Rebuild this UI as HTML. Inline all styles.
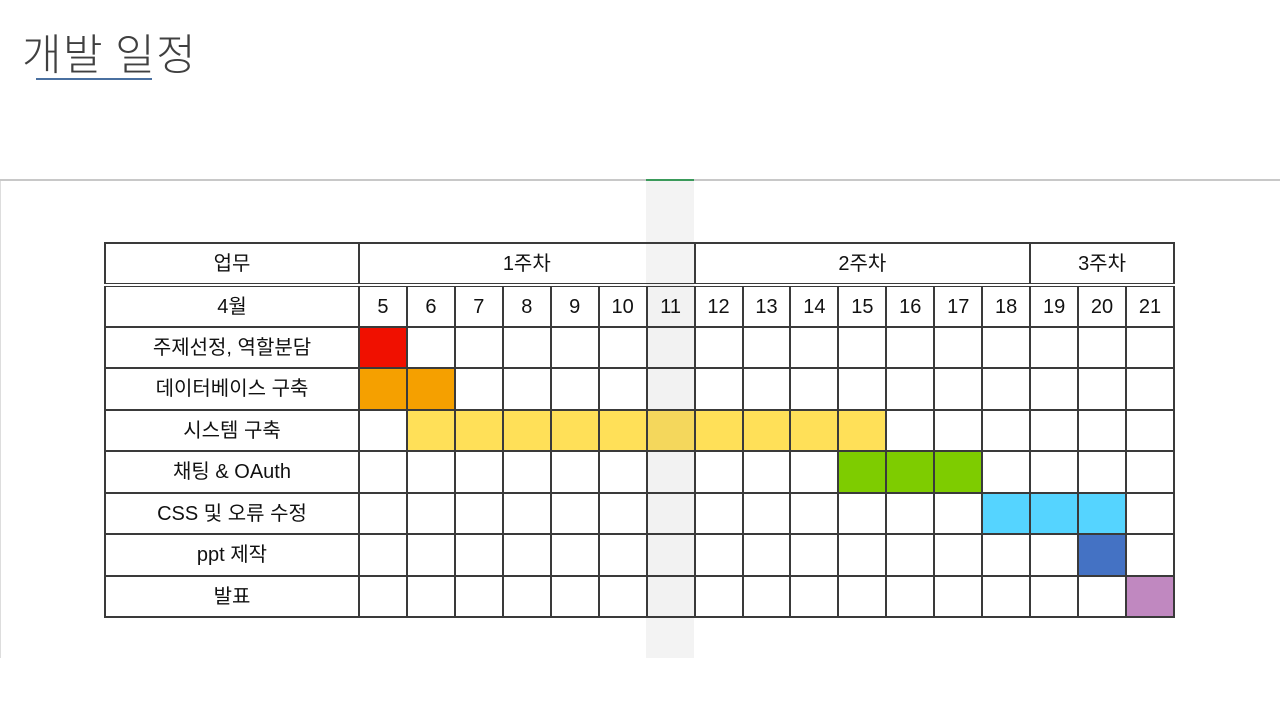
<!DOCTYPE html>
<html><head><meta charset="utf-8"><style>
*{margin:0;padding:0;box-sizing:border-box}
body{width:1280px;height:720px;background:#fff;position:relative;overflow:hidden;font-family:"Liberation Sans","Noto Sans CJK KR",sans-serif}
.title{position:absolute;left:22px;top:21px;font-size:43px;font-weight:300;color:#404040;letter-spacing:1.5px;font-family:"Noto Sans CJK KR","Liberation Sans",sans-serif}
.ul{position:absolute;left:36px;top:78px;width:116px;height:2px;background:#4a70a0}
.hl{position:absolute;left:0;top:179px;width:1280px;height:2px;background:#c8c8c8}
.gl{position:absolute;left:646px;top:179px;width:48px;height:2px;background:#3a9a5a}
.vl{position:absolute;left:0;top:181px;width:1px;height:477px;background:#ddd}
.gc{position:absolute;left:646px;top:181px;width:48px;height:477px;background:#f3f3f3}
table{position:absolute;left:104px;top:242px;border-collapse:collapse;table-layout:fixed;font-family:"Liberation Sans","Noto Sans CJK KR",sans-serif;font-size:20px;color:#111}
td{border:2px solid #3a3a3a;text-align:center;height:41.5px;padding:1px 0 0;line-height:1}
td.g{background:#f2f2f2}
tr.h td{border-bottom:4px double #3a3a3a;height:42px}
.r{background:#f01000}.o{background:#f5a000}.y{background:#ffe058}.yg{background:#f4d75c}.gr{background:#7ecc00}.c{background:#55d4ff}.b{background:#4472c4}.p{background:#c088c0}
</style></head><body>
<div class="title">개발 일정</div>
<div class="ul"></div>
<div class="hl"></div><div class="gl"></div><div class="vl"></div><div class="gc"></div>
<table>
<colgroup><col style="width:254px"><col span="17" style="width:47.95px"></colgroup>
<tr class="h"><td>업무</td><td colspan="7" style="background:transparent">1주차</td><td colspan="7">2주차</td><td colspan="3">3주차</td></tr>
<tr><td>4월</td><td>5</td><td>6</td><td>7</td><td>8</td><td>9</td><td>10</td><td class="g">11</td><td>12</td><td>13</td><td>14</td><td>15</td><td>16</td><td>17</td><td>18</td><td>19</td><td>20</td><td>21</td></tr>
<tr><td>주제선정, 역할분담</td><td class="r"></td><td></td><td></td><td></td><td></td><td></td><td class="g"></td><td></td><td></td><td></td><td></td><td></td><td></td><td></td><td></td><td></td><td></td></tr>
<tr><td>데이터베이스 구축</td><td class="o"></td><td class="o"></td><td></td><td></td><td></td><td></td><td class="g"></td><td></td><td></td><td></td><td></td><td></td><td></td><td></td><td></td><td></td><td></td></tr>
<tr><td>시스템 구축</td><td></td><td class="y"></td><td class="y"></td><td class="y"></td><td class="y"></td><td class="y"></td><td class="yg"></td><td class="y"></td><td class="y"></td><td class="y"></td><td class="y"></td><td></td><td></td><td></td><td></td><td></td><td></td></tr>
<tr><td>채팅 &amp; OAuth</td><td></td><td></td><td></td><td></td><td></td><td></td><td class="g"></td><td></td><td></td><td></td><td class="gr"></td><td class="gr"></td><td class="gr"></td><td></td><td></td><td></td><td></td></tr>
<tr><td>CSS 및 오류 수정</td><td></td><td></td><td></td><td></td><td></td><td></td><td class="g"></td><td></td><td></td><td></td><td></td><td></td><td></td><td class="c"></td><td class="c"></td><td class="c"></td><td></td></tr>
<tr><td>ppt 제작</td><td></td><td></td><td></td><td></td><td></td><td></td><td class="g"></td><td></td><td></td><td></td><td></td><td></td><td></td><td></td><td></td><td class="b"></td><td></td></tr>
<tr><td>발표</td><td></td><td></td><td></td><td></td><td></td><td></td><td class="g"></td><td></td><td></td><td></td><td></td><td></td><td></td><td></td><td></td><td></td><td class="p"></td></tr>
</table>
</body></html>
